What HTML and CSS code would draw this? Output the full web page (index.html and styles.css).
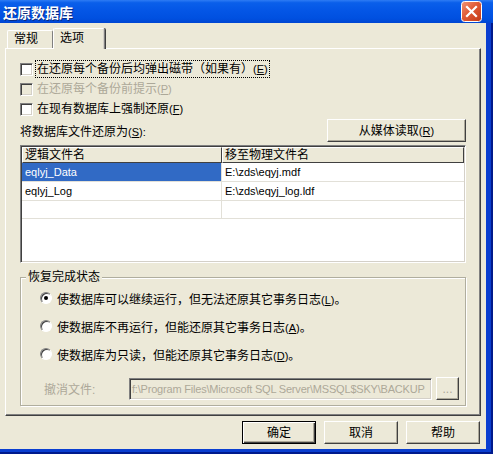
FILE: index.html
```html
<!DOCTYPE html>
<html>
<head>
<meta charset="utf-8">
<link rel="stylesheet" href="styles.css">
</head>
<body>
<div class="window">
  <div class="titlebar">
    <span class="title">还原数据库</span>
    <span class="close">
      <svg width="21" height="21" viewBox="0 0 21 21">
        <defs>
          <linearGradient id="cg" x1="0" y1="0" x2="1" y2="1">
            <stop offset="0" stop-color="#F09678"/>
            <stop offset="0.45" stop-color="#E05A36"/>
            <stop offset="1" stop-color="#C23A16"/>
          </linearGradient>
        </defs>
        <rect x="0.5" y="0.5" width="20" height="20" rx="3" fill="url(#cg)" stroke="#FFFFFF"/>
        <path d="M6 6 L15 15 M15 6 L6 15" stroke="#FFFFFF" stroke-width="2.2" stroke-linecap="square"/>
      </svg>
    </span>
  </div>
  <div class="client">
    <div class="tabs">
      <div class="tab">常规</div>
      <div class="tab active">选项</div>
    </div>
    <div class="panel">
      <div class="check">
        <span class="box"></span>
        <span class="lbl focus">在还原每个备份后均弹出磁带（如果有）<span class="acc">(<u>E</u>)</span></span>
      </div>
      <div class="check disabled">
        <span class="box"></span>
        <span class="lbl">在还原每个备份前提示<span class="acc">(<u>P</u>)</span></span>
      </div>
      <div class="check">
        <span class="box"></span>
        <span class="lbl">在现有数据库上强制还原<span class="acc">(<u>F</u>)</span></span>
      </div>
      <div class="restore-row">
        <span>将数据库文件还原为<span class="acc">(<u>S</u>):</span></span>
        <button class="btn media">从媒体读取<span class="acc">(<u>R</u>)</span></button>
      </div>
      <div class="grid">
        <div class="grid-head">
          <div class="hcell c1">逻辑文件名</div>
          <div class="hcell c2">移至物理文件名</div>
        </div>
        <div class="grid-row">
          <div class="cell c1 sel">eqlyj_Data</div>
          <div class="cell c2">E:\zds\eqyj.mdf</div>
        </div>
        <div class="grid-row">
          <div class="cell c1">eqlyj_Log</div>
          <div class="cell c2">E:\zds\eqyj_log.ldf</div>
        </div>
        <div class="grid-row short">
          <div class="cell c1"></div>
          <div class="cell c2"></div>
        </div>
      </div>
      <fieldset class="group">
        <legend>恢复完成状态</legend>
        <div class="radio">
          <span class="dot on"></span>
          <span>使数据库可以继续运行，但无法还原其它事务日志<span class="acc">(<u>L</u>)</span>。</span>
        </div>
        <div class="radio">
          <span class="dot"></span>
          <span>使数据库不再运行，但能还原其它事务日志<span class="acc">(<u>A</u>)</span>。</span>
        </div>
        <div class="radio">
          <span class="dot"></span>
          <span>使数据库为只读，但能还原其它事务日志<span class="acc">(<u>D</u>)</span>。</span>
        </div>
        <div class="undo">
          <span class="undo-lbl">撤消文件:</span>
          <div class="input">f:\Program Files\Microsoft SQL Server\MSSQL$SKY\BACKUP</div>
          <button class="btn dots">...</button>
        </div>
      </fieldset>
    </div>
    <div class="actions">
      <button class="btn act default">确定</button>
      <button class="btn act">取消</button>
      <button class="btn act">帮助</button>
    </div>
  </div>
</div>
</body>
</html>
```

FILE: styles.css
```css
* { box-sizing: border-box; }
html, body { margin: 0; padding: 0; }
body {
  font: 12px "Liberation Sans", "Noto Sans CJK SC", sans-serif;
  color: #000;
  background: #ECE9D8;
}
u { text-decoration: underline; }
.acc { font-size: 11px; }

.window {
  width: 493px;
  height: 454px;
  display: flex;
  flex-direction: column;
  background: #0A3ED0;
  box-shadow: inset -2px -2px 0 #001A8C;
}

.titlebar {
  height: 23px;
  flex: none;
  display: flex;
  align-items: center;
  justify-content: space-between;
  padding: 0 11px 0 3px;
  background: linear-gradient(#2E7CF4 0%, #0A5FEA 12%, #0456E6 45%, #0050E0 80%, #0046D2 100%);
}
.title {
  color: #fff;
  font: bold 14px "Noto Sans CJK SC", sans-serif;
  text-shadow: 1px 1px 0 #0A2A80;
  line-height: 16px;
}
.close { display: flex; height: 21px; }

.client {
  flex: 1;
  margin: 0 7px 5px 0;
  background: #ECE9D8;
  display: flex;
  flex-direction: column;
}

.tabs {
  height: 25px;
  flex: none;
  display: flex;
  align-items: flex-end;
  padding-left: 7px;
  position: relative;
  z-index: 2;
}
.tab {
  height: 18px;
  padding: 0 7px 0 6px;
  line-height: 17px;
  border: 1px solid;
  border-color: #FFFFFF #808080 transparent #FFFFFF;
  border-bottom: none;
  border-radius: 2px 2px 0 0;
  background: #ECE9D8;
  width: 46px;
}
.tab.active {
  height: 21px;
  margin-bottom: -1px;
  width: 52px;
  box-shadow: inset -1px 0 0 #D4D0C8, 1px 0 0 #404040;
  line-height: 19px;
}

.panel {
  margin: 0 5px 0 5px;
  height: 368px;
  flex: none;
  border: 1px solid;
  border-color: #FFFFFF #404040 #404040 #FFFFFF;
  box-shadow: inset -1px -1px 0 #808080;
  padding: 10px 14px 0 14px;
  display: flex;
  flex-direction: column;
  position: relative;
  z-index: 1;
}

.check {
  height: 20px;
  display: flex;
  align-items: center;
}
.box {
  width: 13px;
  height: 13px;
  background: #fff;
  border: 1px solid;
  border-color: #808080 #FFFFFF #FFFFFF #808080;
  box-shadow: inset 1px 1px 0 #404040, inset -1px -1px 0 #D4D0C8;
  margin-right: 3px;
  flex: none;
}
.lbl { padding: 1px 1px; line-height: 14px; }
.lbl.focus { outline: 1px dotted #000; outline-offset: 0; }
.check.disabled .lbl { color: #ACA899; }
.check.disabled .box { background: #ECE9D8; }

.restore-row {
  height: 23px;
  display: flex;
  align-items: center;
  justify-content: space-between;
}

.btn {
  font: 12px "Liberation Sans", "Noto Sans CJK SC", sans-serif;
  color: #000;
  background: #ECE9D8;
  border: 1px solid;
  border-color: #FFFFFF #404040 #404040 #FFFFFF;
  box-shadow: inset -1px -1px 0 #ACA899;
  padding: 0;
  height: 23px;
  line-height: 20px;
}
.media { width: 139px; }

.grid {
  margin-top: 3px;
  height: 118px;
  background: #fff;
  border: 1px solid;
  border-color: #808080 #FFFFFF #FFFFFF #808080;
  box-shadow: inset 1px 1px 0 #404040, inset -1px -1px 0 #D4D0C8;
  padding: 1px 1px 1px 1px;
  display: flex;
  flex-direction: column;
}
.grid-head { display: flex; height: 16px; }
.hcell {
  background: #ECE9D8;
  border: 1px solid;
  border-color: #FFFFFF #404040 #404040 #FFFFFF;
  line-height: 14px;
  padding-left: 2px;
}
.grid-head .c1 { width: 200px; }
.grid-head .c2 { flex: 1; }
.grid-row {
  display: flex;
  height: 19px;
  border-bottom: 1px solid #E2E0D8;
}
.grid-row.short { height: 18px; }
.cell {
  line-height: 18px;
  padding-left: 3px;
  font-size: 11px;
}
.grid-row .c1 { width: 200px; border-right: 1px solid #E2E0D8; }
.grid-row .c2 { flex: 1; }
.cell.sel { background: #316AC5; color: #fff; }

.group {
  margin: 7px 0 0 0;
  padding: 0 0 7px 19px;
  border: 1px solid #B0AE9E;
  box-shadow: inset 1px 1px 0 #fff, 1px 1px 0 #fff;
  height: 136px;
}
.group legend {
  padding: 0 2px;
  margin-left: -14px;
  line-height: 14px;
  background: #ECE9D8;
}
.radio {
  height: 28px;
  display: flex;
  align-items: center;
}
.dot {
  width: 12px;
  height: 12px;
  border-radius: 50%;
  background: #fff;
  border: 1px solid;
  border-color: #808080 #FFFFFF #FFFFFF #808080;
  box-shadow: inset 1px 1px 0 #404040;
  margin-right: 5px;
  flex: none;
  display: flex;
  align-items: center;
  justify-content: center;
}
.dot.on::after {
  content: "";
  width: 4px;
  height: 4px;
  border-radius: 50%;
  background: #000;
}

.undo {
  margin-top: 9px;
  display: flex;
  align-items: center;
  height: 23px;
}
.undo-lbl {
  width: 85px;
  margin-left: 4px;
  color: #ACA899;
}
.input {
  width: 303px;
  height: 22px;
  border: 1px solid;
  border-color: #808080 #FFFFFF #FFFFFF #808080;
  box-shadow: inset 1px 1px 0 #404040, inset -1px -1px 0 #D4D0C8;
  color: #ACA899;
  white-space: nowrap;
  overflow: hidden;
  line-height: 20px;
  padding-left: 2px;
  font-size: 11px;
  letter-spacing: -0.2px;
}
.dots {
  width: 23px;
  margin-left: 4px;
  color: #ACA899;
  line-height: 18px;
}

.actions {
  display: flex;
  justify-content: flex-end;
  gap: 8px;
  padding: 5px 6px 0 0;
}
.act { width: 74px; }
.act.default {
  border: 1px solid #000;
  box-shadow: inset 1px 1px 0 #fff, inset -1px -1px 0 #404040, inset -2px -2px 0 #ACA899;
}
```
